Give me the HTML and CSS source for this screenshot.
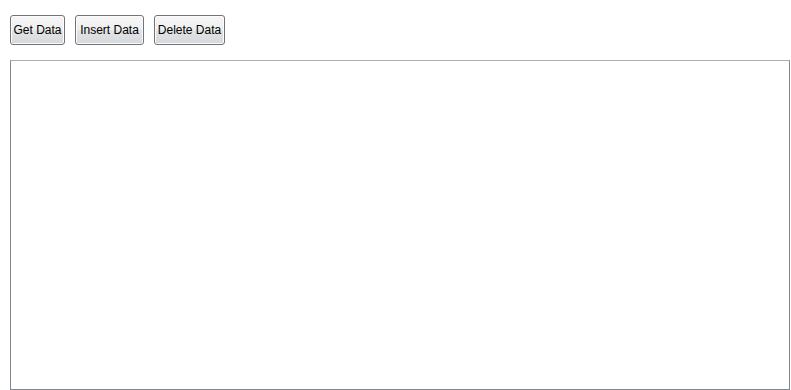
FILE: index.html
```html
<!DOCTYPE html>
<html lang="en">
<head>
    <meta charset="utf-8">
    <title>Data</title>
    <link rel="stylesheet" href="styles.css">
</head>
<body>
<div class="toolbar">
    <button class="btn btn-get">Get Data</button>
    <button class="btn btn-insert">Insert Data</button>
    <button class="btn btn-delete">Delete Data</button>
</div>
<div class="grid-box"></div>
</body>
</html>
```

FILE: styles.css
```css
html, body {
    margin: 0;
    padding: 0;
    background: #ffffff;
    font-family: "Liberation Sans", Arial, sans-serif;
}

.toolbar {
    display: flex;
    gap: 10px;
    padding: 15px 0 0 10px;
}

.btn {
    box-sizing: border-box;
    height: 30px;
    padding: 0;
    margin: 0;
    white-space: nowrap;
    font-family: "Liberation Sans", Arial, sans-serif;
    font-size: 12px;
    color: #000;
    border: 1px solid #707479;
    border-radius: 3px;
    box-shadow: inset 0 0 0 1px #fcfcfc;
    background: linear-gradient(to bottom, #f6f6f6 0%, #eeeeee 50%, #e2e3e5 52%, #d6d9dc 100%);
}

.btn-get {
    width: 55px;
}

.btn-insert {
    width: 69px;
}

.btn-delete {
    width: 71px;
}

.grid-box {
    box-sizing: border-box;
    width: 780px;
    height: 330px;
    margin: 15px 0 0 10px;
    border: 1px solid #828790;
    border-top-color: #abadb3;
    background: #ffffff;
}
```
